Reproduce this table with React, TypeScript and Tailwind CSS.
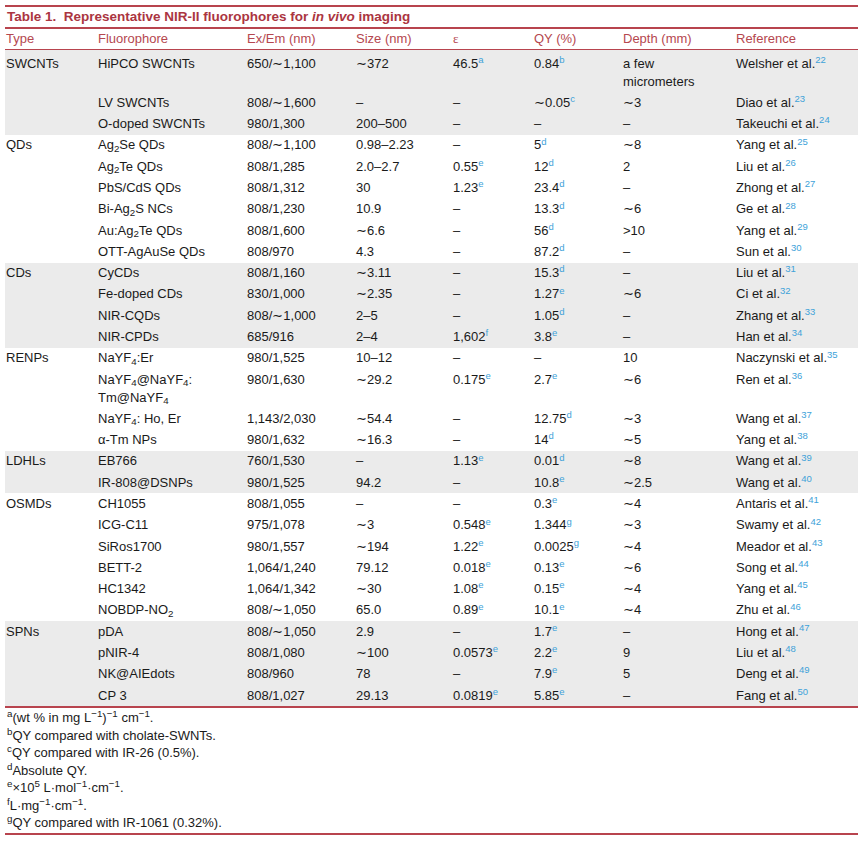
import type { ReactNode } from "react";

type Row = {
  name: ReactNode;
  exem: string;
  size: string;
  eps: ReactNode;
  qy: ReactNode;
  depth: ReactNode;
  ref: string;
  num: number;
};

type Group = { type: string; gray: boolean; rows: Row[] };

function S({ children }: { children: ReactNode }) {
  return <sup className="text-[9.5px] text-[#3ea2d9]">{children}</sup>;
}

function v(value: string, note?: string) {
  return (
    <>
      {value}
      {note && <S>{note}</S>}
    </>
  );
}

const groups: Group[] = [
  {
    type: "SWCNTs",
    gray: true,
    rows: [
      { name: "HiPCO SWCNTs", exem: "650/∼1,100", size: "∼372", eps: v("46.5", "a"), qy: v("0.84", "b"), depth: <>a few<br />micrometers</>, ref: "Welsher et al.", num: 22 },
      { name: "LV SWCNTs", exem: "808/∼1,600", size: "–", eps: "–", qy: v("∼0.05", "c"), depth: "∼3", ref: "Diao et al.", num: 23 },
      { name: "O-doped SWCNTs", exem: "980/1,300", size: "200–500", eps: "–", qy: "–", depth: "–", ref: "Takeuchi et al.", num: 24 },
    ],
  },
  {
    type: "QDs",
    gray: false,
    rows: [
      { name: <>Ag<sub>2</sub>Se QDs</>, exem: "808/∼1,100", size: "0.98–2.23", eps: "–", qy: v("5", "d"), depth: "∼8", ref: "Yang et al.", num: 25 },
      { name: <>Ag<sub>2</sub>Te QDs</>, exem: "808/1,285", size: "2.0–2.7", eps: v("0.55", "e"), qy: v("12", "d"), depth: "2", ref: "Liu et al.", num: 26 },
      { name: "PbS/CdS QDs", exem: "808/1,312", size: "30", eps: v("1.23", "e"), qy: v("23.4", "d"), depth: "–", ref: "Zhong et al.", num: 27 },
      { name: <>Bi-Ag<sub>2</sub>S NCs</>, exem: "808/1,230", size: "10.9", eps: "–", qy: v("13.3", "d"), depth: "∼6", ref: "Ge et al.", num: 28 },
      { name: <>Au:Ag<sub>2</sub>Te QDs</>, exem: "808/1,600", size: "∼6.6", eps: "–", qy: v("56", "d"), depth: ">10", ref: "Yang et al.", num: 29 },
      { name: "OTT-AgAuSe QDs", exem: "808/970", size: "4.3", eps: "–", qy: v("87.2", "d"), depth: "–", ref: "Sun et al.", num: 30 },
    ],
  },
  {
    type: "CDs",
    gray: true,
    rows: [
      { name: "CyCDs", exem: "808/1,160", size: "∼3.11", eps: "–", qy: v("15.3", "d"), depth: "–", ref: "Liu et al.", num: 31 },
      { name: "Fe-doped CDs", exem: "830/1,000", size: "∼2.35", eps: "–", qy: v("1.27", "e"), depth: "∼6", ref: "Ci et al.", num: 32 },
      { name: "NIR-CQDs", exem: "808/∼1,000", size: "2–5", eps: "–", qy: v("1.05", "d"), depth: "–", ref: "Zhang et al.", num: 33 },
      { name: "NIR-CPDs", exem: "685/916", size: "2–4", eps: v("1,602", "f"), qy: v("3.8", "e"), depth: "–", ref: "Han et al.", num: 34 },
    ],
  },
  {
    type: "RENPs",
    gray: false,
    rows: [
      { name: <>NaYF<sub>4</sub>:Er</>, exem: "980/1,525", size: "10–12", eps: "–", qy: "–", depth: "10", ref: "Naczynski et al.", num: 35 },
      { name: <>NaYF<sub>4</sub>@NaYF<sub>4</sub>:<br />Tm@NaYF<sub>4</sub></>, exem: "980/1,630", size: "∼29.2", eps: v("0.175", "e"), qy: v("2.7", "e"), depth: "∼6", ref: "Ren et al.", num: 36 },
      { name: <>NaYF<sub>4</sub>: Ho, Er</>, exem: "1,143/2,030", size: "∼54.4", eps: "–", qy: v("12.75", "d"), depth: "∼3", ref: "Wang et al.", num: 37 },
      { name: "α-Tm NPs", exem: "980/1,632", size: "∼16.3", eps: "–", qy: v("14", "d"), depth: "∼5", ref: "Yang et al.", num: 38 },
    ],
  },
  {
    type: "LDHLs",
    gray: true,
    rows: [
      { name: "EB766", exem: "760/1,530", size: "–", eps: v("1.13", "e"), qy: v("0.01", "d"), depth: "∼8", ref: "Wang et al.", num: 39 },
      { name: "IR-808@DSNPs", exem: "980/1,525", size: "94.2", eps: "–", qy: v("10.8", "e"), depth: "∼2.5", ref: "Wang et al.", num: 40 },
    ],
  },
  {
    type: "OSMDs",
    gray: false,
    rows: [
      { name: "CH1055", exem: "808/1,055", size: "–", eps: "–", qy: v("0.3", "e"), depth: "∼4", ref: "Antaris et al.", num: 41 },
      { name: "ICG-C11", exem: "975/1,078", size: "∼3", eps: v("0.548", "e"), qy: v("1.344", "g"), depth: "∼3", ref: "Swamy et al.", num: 42 },
      { name: "SiRos1700", exem: "980/1,557", size: "∼194", eps: v("1.22", "e"), qy: v("0.0025", "g"), depth: "∼4", ref: "Meador et al.", num: 43 },
      { name: "BETT-2", exem: "1,064/1,240", size: "79.12", eps: v("0.018", "e"), qy: v("0.13", "e"), depth: "∼6", ref: "Song et al.", num: 44 },
      { name: "HC1342", exem: "1,064/1,342", size: "∼30", eps: v("1.08", "e"), qy: v("0.15", "e"), depth: "∼4", ref: "Yang et al.", num: 45 },
      { name: <>NOBDP-NO<sub>2</sub></>, exem: "808/∼1,050", size: "65.0", eps: v("0.89", "e"), qy: v("10.1", "e"), depth: "∼4", ref: "Zhu et al.", num: 46 },
    ],
  },
  {
    type: "SPNs",
    gray: true,
    rows: [
      { name: "pDA", exem: "808/∼1,050", size: "2.9", eps: "–", qy: v("1.7", "e"), depth: "–", ref: "Hong et al.", num: 47 },
      { name: "pNIR-4", exem: "808/1,080", size: "∼100", eps: v("0.0573", "e"), qy: v("2.2", "e"), depth: "9", ref: "Liu et al.", num: 48 },
      { name: "NK@AIEdots", exem: "808/960", size: "78", eps: "–", qy: v("7.9", "e"), depth: "5", ref: "Deng et al.", num: 49 },
      { name: "CP 3", exem: "808/1,027", size: "29.13", eps: v("0.0819", "e"), qy: v("5.85", "e"), depth: "–", ref: "Fang et al.", num: 50 },
    ],
  },
];

const cols = "grid grid-cols-[92px_149px_109px_97px_81px_89px_113px_1fr]";

export default function App() {
  return (
    <div className="min-h-[843px] bg-white font-['Liberation_Sans',Arial,sans-serif] text-[13px] text-[#1a1a1a]">
      <div className="ml-[5px] w-[853px] pt-[5px]">
        <div className="border-t-2 border-b-2 border-[#b8444e] pl-[2px] text-[13.5px] leading-[20px] font-bold text-[#ab3541]">
          Table 1.&nbsp; Representative NIR-II fluorophores for <i>in vivo</i> imaging
        </div>
        <div className={`${cols} border-b border-[#b8444e] pl-[1px] leading-[20px] text-[#b5474f]`}>
          <div>Type</div>
          <div>Fluorophore</div>
          <div>Ex/Em (nm)</div>
          <div>Size (nm)</div>
          <div className="font-['Liberation_Serif',serif]">ε</div>
          <div>QY (%)</div>
          <div>Depth (mm)</div>
          <div>Reference</div>
        </div>
        {groups.map((g, gi) => (
          <div key={g.type} className={`${g.gray ? "bg-[#ebebeb]" : "bg-white"} ${gi === 0 ? "pt-[3px]" : ""}`}>
            {g.rows.map((r, ri) => (
              <div key={r.num} className={`${cols} py-[1.65px] pl-[1px] leading-[18px]`}>
                <div>{ri === 0 ? g.type : ""}</div>
                <div>{r.name}</div>
                <div>{r.exem}</div>
                <div>{r.size}</div>
                <div>{r.eps}</div>
                <div>{r.qy}</div>
                <div>{r.depth}</div>
                <div>
                  {r.ref}
                  <S>{r.num}</S>
                </div>
              </div>
            ))}
          </div>
        ))}
        <div className="border-t-2 border-b-2 border-[#b8444e] py-[1px] pl-[2px] leading-[17.5px]">
          <div><sup>a</sup>(wt % in mg L<sup>−1</sup>)<sup>−1</sup> cm<sup>−1</sup>.</div>
          <div><sup>b</sup>QY compared with cholate-SWNTs.</div>
          <div><sup>c</sup>QY compared with IR-26 (0.5%).</div>
          <div><sup>d</sup>Absolute QY.</div>
          <div><sup>e</sup>×10<sup>5</sup> L·mol<sup>−1</sup>·cm<sup>−1</sup>.</div>
          <div><sup>f</sup>L·mg<sup>−1</sup>·cm<sup>−1</sup>.</div>
          <div><sup>g</sup>QY compared with IR-1061 (0.32%).</div>
        </div>
      </div>
    </div>
  );
}
